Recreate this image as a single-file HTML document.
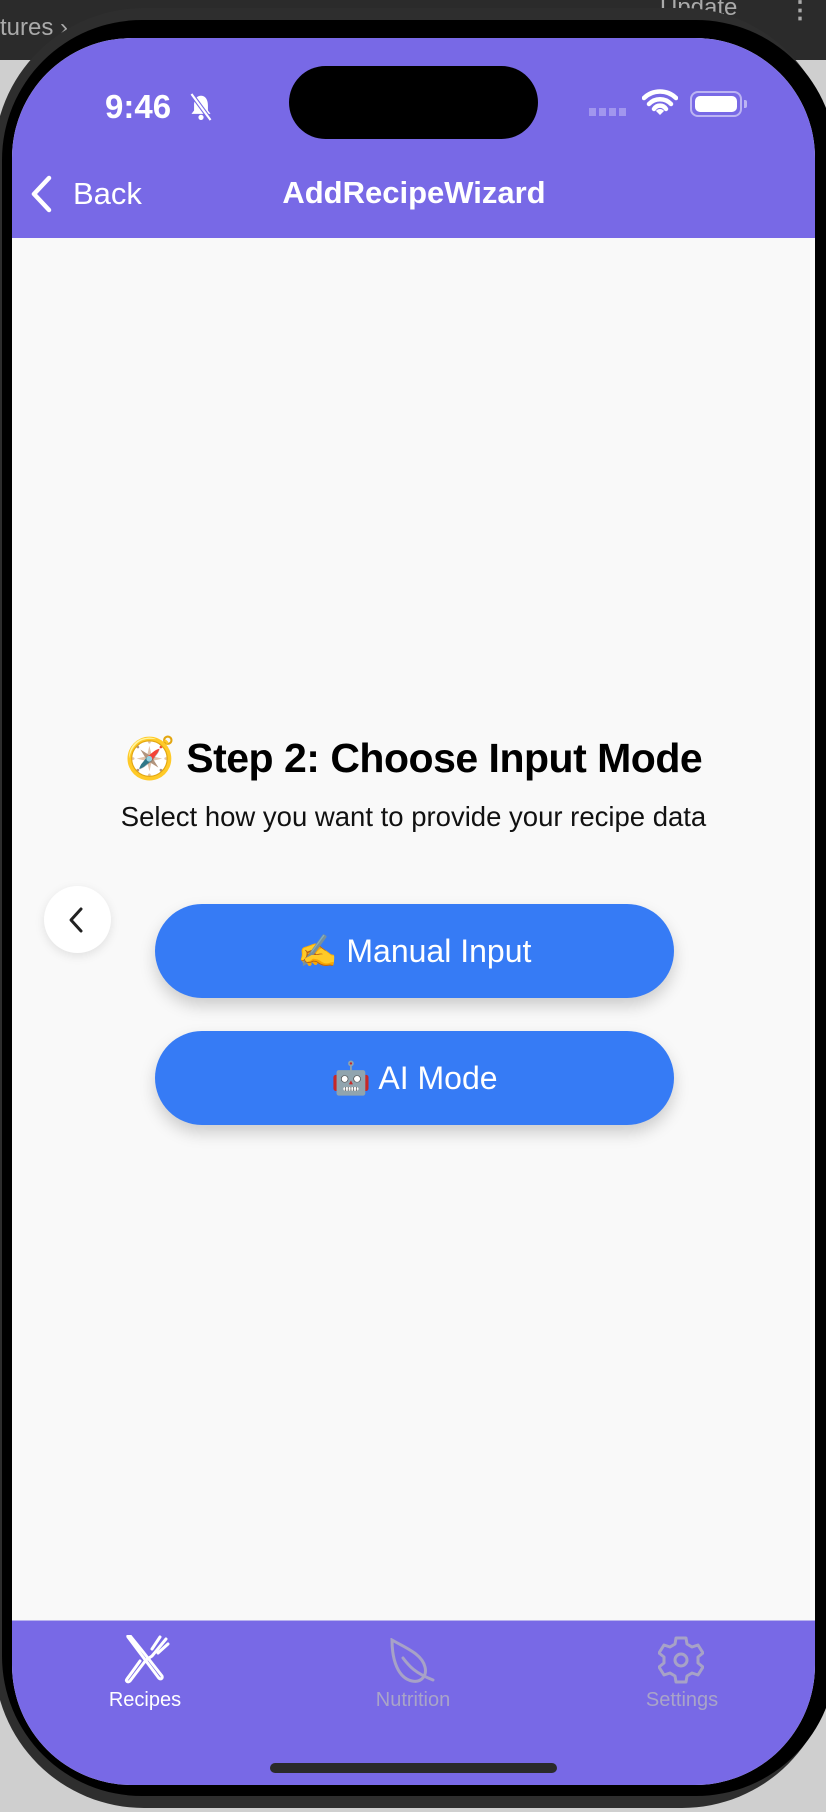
<!DOCTYPE html>
<html><head><meta charset="utf-8"><style>
*{margin:0;padding:0;box-sizing:border-box}
html,body{width:826px;height:1812px;overflow:hidden;background:#cfcfcf;font-family:"Liberation Sans",sans-serif}
.topbar{position:absolute;left:0;top:0;width:826px;height:60px;background:#2b2b2b}
.topbar span{position:absolute;color:#aaa;font-size:24px}
.phone{position:absolute;left:-6px;top:8px;width:838px;height:1800px;background:#2e2e2e;border-radius:150px}
.bezel{position:absolute;left:2px;top:20px;width:834px;height:1776px;background:#000;border-radius:140px}
.screen{position:absolute;left:12px;top:38px;width:803px;height:1747px;background:#f9f9f9;border-radius:120px;overflow:hidden}
.nav{position:absolute;left:0;top:0;width:803px;height:200px;background:#7869e6}
.island{position:absolute;left:277px;top:28px;width:249px;height:73px;background:#000;border-radius:37px}
.time{position:absolute;left:93px;top:50px;color:#fff;font-size:33px;font-weight:bold}
.w{color:#fff;position:absolute}
.tab{position:absolute;top:1582px;width:803px;height:165px;background:#7869e6;border-top:1px solid #b9b3ee}
.lbl{position:absolute;top:68px;font-size:20px;transform:translateX(-50%);white-space:nowrap}
.btn{position:absolute;left:143px;width:519px;height:94px;border-radius:47px;background:#367bf5;color:#fff;font-size:32px;text-align:center;line-height:94px;box-shadow:0 8px 16px rgba(0,0,0,.18)}
</style></head><body>
<div class="topbar"><span style="left:0;top:14px">tures ›</span><span style="left:660px;top:-6px">Update</span><span style="left:788px;top:-4px;font-weight:bold">⋮</span></div>
<div class="phone"></div>
<div class="bezel"></div>
<div class="screen">
 <div class="nav">
  <div class="island"></div>
  <div class="time">9:46</div>
  <svg class="w" style="left:176px;top:54px" width="26" height="30" viewBox="0 0 30 34"><path d="M15 4c-6 0-8 6-8 11v6l-3 4h22l-3-4v-6c0-5-2-11-8-11z" fill="#fff"/><circle cx="15" cy="29" r="3" fill="#fff"/><path d="M4 2l22 30" stroke="#7869e6" stroke-width="5"/><path d="M4 2l22 30" stroke="#fff" stroke-width="2.5"/></svg>
  <div class="w" style="left:577px;top:70px;width:40px;height:8px;background:repeating-linear-gradient(90deg,rgba(255,255,255,.3) 0 7px,transparent 7px 10px)"></div>
  <svg class="w" style="left:630px;top:51px" width="36" height="27" viewBox="0 0 36 27"><path d="M2 9a23 23 0 0 1 32 0M7 15a15 15 0 0 1 22 0M12 20a7 7 0 0 1 12 0" stroke="#fff" stroke-width="4.5" fill="none" stroke-linecap="round"/><path d="M14 22l4 4 4-4a5 5 0 0 0-8 0z" fill="#fff"/></svg>
  <div class="w" style="left:678px;top:53px;width:52px;height:26px;border:2px solid rgba(255,255,255,.5);border-radius:8px;padding:3px"><div style="width:100%;height:100%;background:#fff;border-radius:5px"></div></div>
  <div class="w" style="left:732px;top:62px;width:3px;height:8px;background:rgba(255,255,255,.5);border-radius:0 2px 2px 0"></div>
  <svg class="w" style="left:17px;top:137px" width="24" height="38" viewBox="0 0 24 38"><path d="M20 3L5 19l15 16" stroke="#fff" stroke-width="4.5" fill="none" stroke-linecap="round" stroke-linejoin="round"/></svg>
  <div class="w" style="left:61px;top:138px;font-size:31px">Back</div>
  <div class="w" style="left:252px;top:137px;font-size:31px;font-weight:bold;width:300px;text-align:center">AddRecipeWizard</div>
 </div>
 <div style="position:absolute;left:0;top:697px;width:803px;text-align:center;font-size:41px;font-weight:bold;color:#000;letter-spacing:-0.5px">🧭 Step 2: Choose Input Mode</div>
 <div style="position:absolute;left:0;top:763px;width:803px;text-align:center;font-size:27.5px;color:#111">Select how you want to provide your recipe data</div>
 <div style="position:absolute;left:32px;top:848px;width:67px;height:67px;border-radius:50%;background:#fff;box-shadow:0 3px 10px rgba(0,0,0,.1)"><svg style="position:absolute;left:22px;top:20px" width="20" height="28" viewBox="0 0 20 28"><path d="M15 3L5 14l10 11" stroke="#222" stroke-width="3" fill="none" stroke-linecap="round" stroke-linejoin="round"/></svg></div>
 <div class="btn" style="top:866px">✍️ Manual Input</div>
 <div class="btn" style="top:993px">🤖 AI Mode</div>
 <div class="tab">
  <svg style="position:absolute;left:110px;top:14px" width="48" height="50" viewBox="0 0 48 50" fill="none" stroke="#fff" stroke-width="3" stroke-linejoin="round" stroke-linecap="round"><path d="M6 2l30 40c2 3 5 2 4-1L22 18 9 2C8 0 5 0 6 2z"/><path d="M44 4L30 21M38 2l-8 12M46 9l-10 9M30 21l-6 4L8 46c-2 2-5 0-3-2l13-18"/></svg>
  <div class="lbl" style="left:133px;color:#fff">Recipes</div>
  <svg style="position:absolute;left:376px;top:17px" width="48" height="46" viewBox="0 0 48 46" fill="none" stroke="#a7a2c7" stroke-width="3" stroke-linecap="round"><path d="M4 2c0 20 6 38 20 41 10 2 15-6 13-14C34 16 18 10 4 2z"/><path d="M15 20c6 8 12 15 30 22"/></svg>
  <div class="lbl" style="left:401px;color:#a9a4c8">Nutrition</div>
  <svg style="position:absolute;left:646px;top:14px" width="46" height="50" viewBox="0 0 46 50" fill="none" stroke="#a7a2c7" stroke-width="3" stroke-linejoin="round"><path d="M18 3h10l1 6 5 3 6-2 5 8-5 4v6l5 4-5 8-6-2-5 3-1 6H18l-1-6-5-3-6 2-5-8 5-4v-6l-5-4 5-8 6 2 5-3z"/><circle cx="23" cy="25" r="6"/></svg>
  <div class="lbl" style="left:670px;color:#a9a4c8">Settings</div>
  <div style="position:absolute;left:258px;top:142px;width:287px;height:10px;border-radius:5px;background:#2a2a2a"></div>
 </div>
</div>
</body></html>
